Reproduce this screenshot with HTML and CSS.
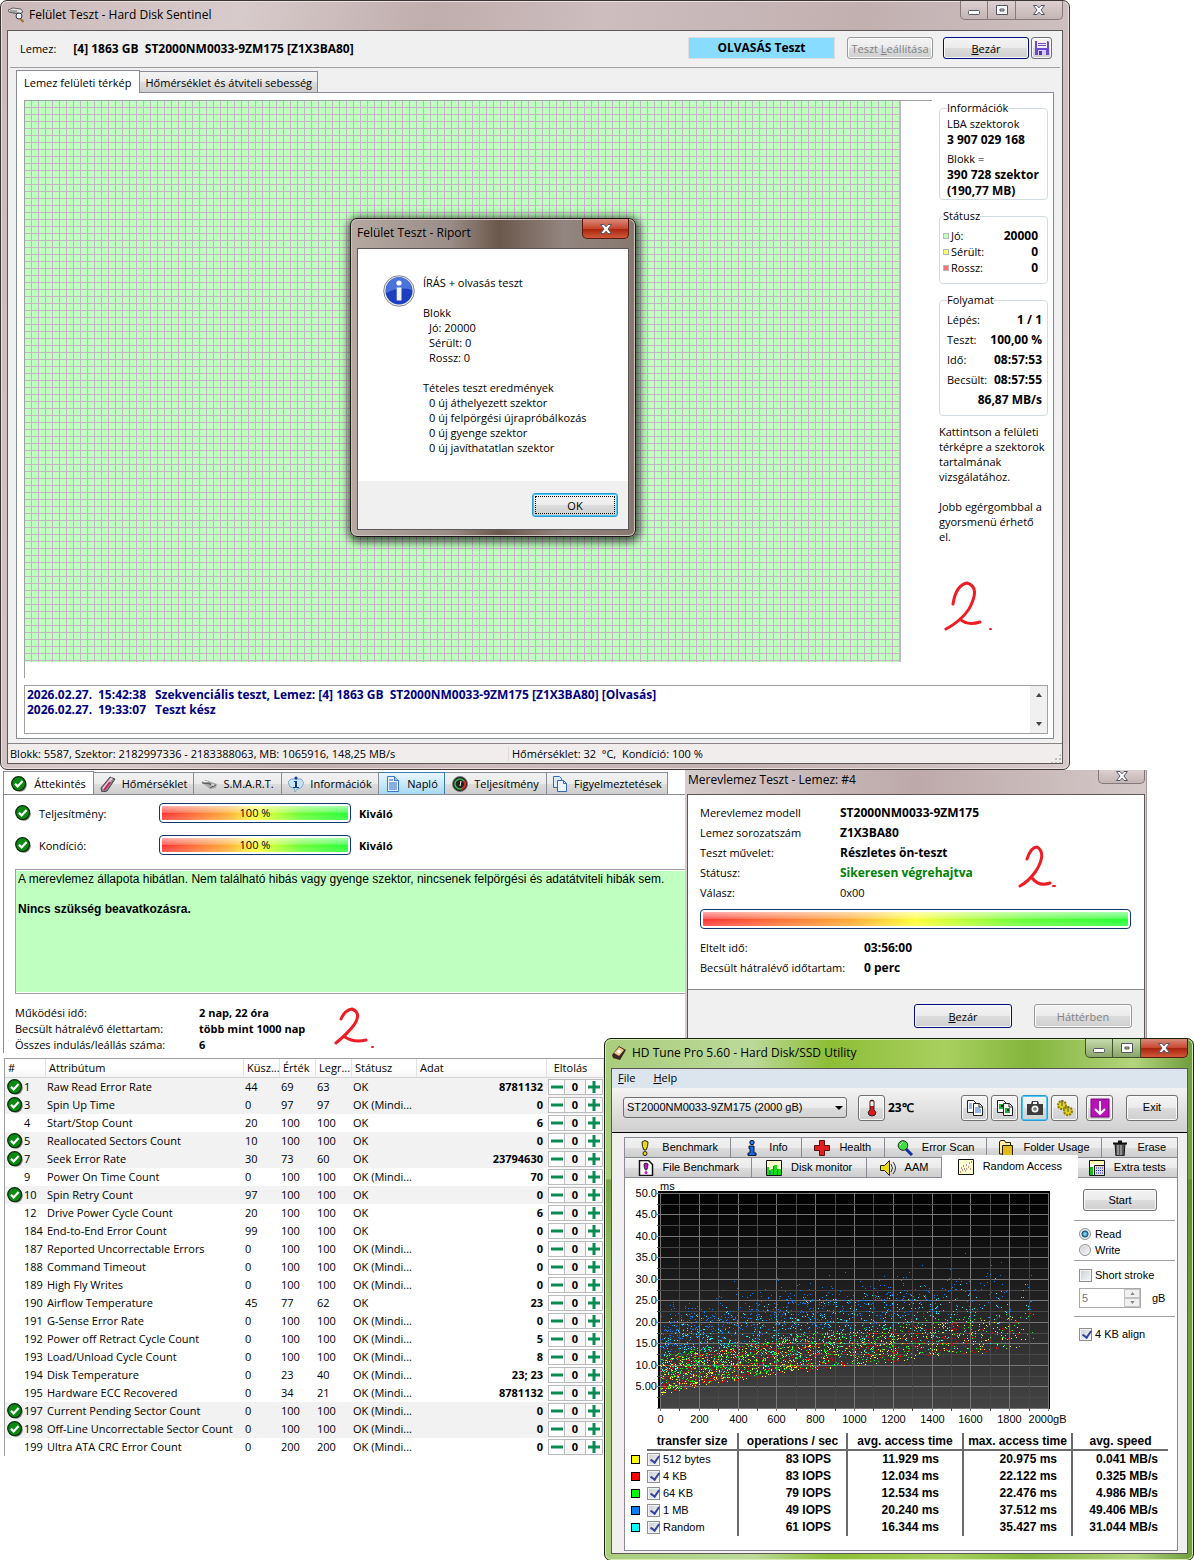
FILE: index.html
```html
<!DOCTYPE html>
<html lang="hu">
<head>
<meta charset="utf-8">
<meta name="viewport" content="width=device-width, initial-scale=1">
<title>Felület Teszt - Hard Disk Sentinel</title>
<link rel="stylesheet" href="styles.css">
</head>
<body>
<svg class="defs" aria-hidden="true">
  <symbol id="ok" viewBox="0 0 16 16"><circle cx="8.8" cy="8.8" r="7" fill="#777"/><circle cx="7.6" cy="7.6" r="6.9" fill="#0a8a12" stroke="#032c05" stroke-width="1.2"/><path d="M4 7.8l2.6 2.6 5-5.4" fill="none" stroke="#fff" stroke-width="2.2"/></symbol>
  <symbol id="min" viewBox="0 0 14 12"><rect x="1.5" y="6.500" width="11" height="4" rx="1" fill="#fff" stroke="#535666"/></symbol>
  <symbol id="max" viewBox="0 0 14 12"><path d="M1.500 1.500h11v9h-11zM5 5v2h4V5z" fill="#fff" fill-rule="evenodd" stroke="#535666"/></symbol>
  <symbol id="close" viewBox="0 0 14 12"><path d="M1.500 1.500h3.500l2 2.300 2-2.300h3.500L9 6l3.500 4.500H9L7 8.200 5 10.500H1.500L5 6z" fill="#fff" stroke="#535666"/></symbol>
  <symbol id="minus" viewBox="0 0 12 12"><path d="M0 4.500h12v3H0z" fill="#0b8a52"/></symbol>
  <symbol id="plus" viewBox="0 0 12 12"><path d="M4.500 0h3v4.500H12v3H7.500V12h-3V7.500H0v-3h4.500z" fill="#0b8a52"/></symbol>
  <symbol id="docs" viewBox="0 0 18 18"><path d="M1.500 1.500h6l3 3v9h-9z" fill="#fff" stroke="#222"/><path d="M7.500 4.500h6l3 3v9h-9z" fill="#fff" stroke="#222"/><path d="M13 4.500v3.500h3.500" fill="none" stroke="#222"/></symbol>
</svg>

<main class="desktop">
  <section class="window surface" aria-label="Felület Teszt">
    <header class="titlebar">
      <svg class="i16" viewBox="0 0 16 16"><path d="M0 3l5-2 8 1 2 3-4 2-10-2z" fill="#e4e4e4" stroke="#444" stroke-width=".8"/><path d="M2 4h7M5 6h6" stroke="#666"/><circle cx="11" cy="9" r="3" fill="#e8f4ff" stroke="#333"/><path d="M12.500 12l3 3" stroke="#a07030" stroke-width="2"/></svg>
      <h1 class="title">Felület Teszt - Hard Disk Sentinel</h1>
      <div class="controls">
        <button aria-label="Kis méret"><svg><use href="#min"/></svg></button><button aria-label="Teljes méret"><svg><use href="#max"/></svg></button><button class="wide" aria-label="Bezárás"><svg><use href="#close"/></svg></button>
      </div>
    </header>
    <div class="client">
      <div class="diskbar">
        <span>Lemez:</span><b class="diskname">[4] 1863 GB &nbsp;ST2000NM0033-9ZM175 [Z1X3BA80]</b>
        <span class="mode">OLVASÁS Teszt</span>
        <button class="btn" disabled>Teszt <u>L</u>eállítása</button>
        <button class="btn default"><u>B</u>ezár</button>
        <button class="btn square" aria-label="Mentés"><svg class="i16" viewBox="0 0 16 16"><path d="M1 1h13l1 1v13H1z" fill="#6c4ad0"/><path d="M3 1h10v7H3z" fill="#f4f0ff"/><path d="M4 3.500h8M4 5.500h8" stroke="#6c4ad0"/><path d="M4 10h8v5H4z" fill="#d6ccf5"/><path d="M5 11h3v4H5z" fill="#5536b0"/></svg></button>
      </div>
      <div class="tabs" role="tablist">
        <button class="tab active" role="tab">Lemez felületi térkép</button>
        <button class="tab" role="tab">Hőmérséklet és átviteli sebesség</button>
      </div>
      <div class="sheet">
        <div class="maprow">
          <div class="maparea"><div class="map"></div></div>
          <aside class="side">
            <fieldset><legend>Információk</legend>
              <p>LBA szektorok</p><p class="spaced"><b>3 907 029 168</b></p>
              <p>Blokk =</p><p><b>390 728 szektor</b></p><p><b>(190,77 MB)</b></p>
            </fieldset>
            <fieldset class="status"><legend>Státusz</legend>
              <dl>
                <div><dt><i class="sw good"></i>Jó:</dt><dd>20000</dd></div>
                <div><dt><i class="sw weak"></i>Sérült:</dt><dd>0</dd></div>
                <div><dt><i class="sw bad"></i>Rossz:</dt><dd>0</dd></div>
              </dl>
            </fieldset>
            <fieldset class="progressbox"><legend>Folyamat</legend>
              <dl>
                <div><dt>Lépés:</dt><dd>1 / 1</dd></div>
                <div><dt>Teszt:</dt><dd>100,00 %</dd></div>
                <div><dt>Idő:</dt><dd>08:57:53</dd></div>
                <div><dt>Becsült:</dt><dd>08:57:55</dd></div>
                <div><dt></dt><dd>86,87 MB/s</dd></div>
              </dl>
            </fieldset>
            <p class="hint">Kattintson a felületi térképre a szektorok tartalmának vizsgálatához.</p>
            <p class="hint">Jobb egérgombbal a gyorsmenü érhető el.</p>
            <svg class="mark mark-a" viewBox="0 0 50 52"><path d="M10 25Q13 6 24 4Q38 8 26 30Q18 42 3 50M17 40Q24 47 37 43"/><path d="M47 50h1"/></svg>
          </aside>
        </div>
        <div class="log">
          <ul>
            <li><span class="d">2026.02.27.</span><span class="t">15:42:38</span>Szekvenciális teszt, Lemez: [4] 1863 GB &nbsp;ST2000NM0033-9ZM175 [Z1X3BA80] [Olvasás]</li>
            <li><span class="d">2026.02.27.</span><span class="t">19:33:07</span>Teszt kész</li>
          </ul>
          <div class="scroll"><button aria-label="Fel"><svg viewBox="0 0 6 4"><path d="M0 4l3-4 3 4z"/></svg></button><button aria-label="Le"><svg viewBox="0 0 6 4"><path d="M0 0l3 4 3-4z"/></svg></button></div>
        </div>
      </div>
      <footer class="statusbar"><span>Blokk: 5587, Szektor: 2182997336 - 2183388063, MB: 1065916, 148,25 MB/s</span><span>Hőmérséklet: 32 &nbsp;°C, &nbsp;Kondíció: 100 %</span><i class="grip"></i></footer>
    </div>

    <section class="window report" role="dialog" aria-label="Felület Teszt - Riport">
      <header class="titlebar"><h2 class="title">Felület Teszt - Riport</h2>
        <div class="controls"><button class="red" aria-label="Bezárás"><svg><use href="#close"/></svg></button></div></header>
      <div class="client">
        <div class="message">
          <svg class="i32" viewBox="0 0 32 32"><circle cx="16" cy="16" r="15.300" fill="#eee" stroke="#888"/><circle cx="16" cy="16" r="13.500" fill="#1b3fbe"/><path d="M3 15a13 13 0 0 1 26 0q-12-4-26 3z" fill="#4a74dc"/><circle cx="16" cy="8" r="2.600" fill="#fff"/><path d="M13.700 12.500h4.800v13h-4.800z" fill="#f2f2f2"/></svg>
          <div>
            <p>ÍRÁS + olvasás teszt</p>
            <p class="gap">Blokk</p>
            <ul><li>Jó: 20000</li><li>Sérült: 0</li><li>Rossz: 0</li></ul>
            <p class="gap">Tételes teszt eredmények</p>
            <ul><li>0 új áthelyezett szektor</li><li>0 új felpörgési újrapróbálkozás</li><li>0 új gyenge szektor</li><li>0 új javíthatatlan szektor</li></ul>
          </div>
        </div>
        <footer><button class="btn focus">OK</button></footer>
      </div>
    </section>
  </section>

  <div class="lower">
    <div class="left">
      <section class="overview" aria-label="Áttekintés">
        <div class="tabs" role="tablist">
          <button class="tab active" role="tab"><svg class="i16"><use href="#ok"/></svg>Áttekintés</button>
          <button class="tab" role="tab"><svg class="i16" viewBox="0 0 16 16"><path d="M1 12L10 1l5 2-8 12-5 1z" fill="#888" stroke="#444"/><path d="M3 13L12 2" stroke="#f0c8dc" stroke-width="2"/><path d="M4 14l6-8" stroke="#d0206c" stroke-width="2"/></svg>Hőmérséklet</button>
          <button class="tab" role="tab"><svg class="i16" viewBox="0 0 16 16"><path d="M0 6l5-2 11 4-1 4-6 1z" fill="#aaa"/><path d="M1 7l9 1M4 5l8 5M9 12l6-3" stroke="#555"/><path d="M2 5l5 1M10 9h3" stroke="#fff"/></svg>S.M.A.R.T.</button>
          <button class="tab" role="tab"><svg class="i16" viewBox="0 0 16 16"><path d="M3 3h10l3 4-3 5-4 1-2 3-1-4-4-1-2-5z" fill="#c9e3f7" stroke="#7da9c8"/><path d="M6 5h3v6h2v1H5v-1h2V6H6z" fill="#123a9a"/><circle cx="8" cy="2" r="1.600" fill="#123a9a"/></svg>Információk</button>
          <button class="tab hot" role="tab"><svg class="i16" viewBox="0 0 16 16"><path d="M2.500.5h7l4 4v11h-11z" fill="#e6f2ff" stroke="#3c78c8"/><path d="M9.500.5v4h4" fill="#9cc4f0" stroke="#3c78c8"/><path d="M4 4h4M4 7h8M4 9h8M4 11h8M4 13h8" stroke="#2e6cc0"/></svg>Napló</button>
          <button class="tab" role="tab"><svg class="i16" viewBox="0 0 16 16"><circle cx="8" cy="8" r="7.500" fill="#222" stroke="#777"/><circle cx="8" cy="8" r="5" fill="none" stroke="#35c048" stroke-width="1.600"/><path d="M12 5a5 5 0 0 1-2 8" fill="none" stroke="#d22" stroke-width="2"/><path d="M8 10l1-5" stroke="#fff"/></svg>Teljesítmény</button>
          <button class="tab" role="tab"><svg class="i16" viewBox="0 0 16 16"><path d="M1.500.5h6l2 2v9h-8z" fill="#dcecff" stroke="#3567b8"/><path d="M5.500 4.500h6l3 3v8h-9z" fill="#eaf4ff" stroke="#3567b8"/><path d="M11.500 4.500v3h3" fill="none" stroke="#3567b8"/></svg>Figyelmeztetések</button>
        </div>
        <div class="pane">
          <div class="health"><svg class="i16"><use href="#ok"/></svg><span>Teljesítmény:</span><div class="meter" role="progressbar" aria-valuenow="100"><span>100 %</span></div><b>Kiváló</b></div>
          <div class="health"><svg class="i16"><use href="#ok"/></svg><span>Kondíció:</span><div class="meter" role="progressbar" aria-valuenow="100"><span>100 %</span></div><b>Kiváló</b></div>
          <div class="verdict"><p>A merevlemez állapota hibátlan. Nem található hibás vagy gyenge szektor, nincsenek felpörgési és adatátviteli hibák sem.</p><p><b>Nincs szükség beavatkozásra.</b></p></div>
          <dl class="facts">
            <dt>Működési idő:</dt><dd>2 nap, 22 óra</dd>
            <dt>Becsült hátralévő élettartam:</dt><dd>több mint 1000 nap</dd>
            <dt>Összes indulás/leállás száma:</dt><dd>6</dd>
          </dl>
          <svg class="mark mark-b" viewBox="0 0 42 42"><path d="M8 13Q12 4 19 3Q29 7 21 19Q15 27 3 37M12 31Q21 37 33 34"/><path d="M39 41h1"/></svg>
        </div>
      </section>
      <table class="smart">
        <colgroup><col class="c-id"><col class="c-name"><col class="c-n"><col class="c-n"><col class="c-n"><col class="c-st"><col class="c-data"><col class="c-off"></colgroup>
        <thead><tr><th>#</th><th>Attribútum</th><th>Küsz...</th><th>Érték</th><th>Legr...</th><th>Státusz</th><th>Adat</th><th class="mid">Eltolás</th></tr></thead>
        <tbody id="smart-rows"></tbody>
      </table>
    </div>

    <div class="right">
      <section class="selftest" aria-label="Merevlemez Teszt">
        <header class="titlebar"><h2 class="title">Merevlemez Teszt - Lemez: #4</h2><div class="controls"><button class="wide" aria-label="Bezárás"><svg><use href="#close"/></svg></button></div></header>
        <div class="client">
          <dl class="pairs">
            <dt>Merevlemez modell</dt><dd>ST2000NM0033-9ZM175</dd>
            <dt>Lemez sorozatszám</dt><dd>Z1X3BA80</dd>
            <dt>Teszt művelet:</dt><dd>Részletes ön-teszt</dd>
            <dt>Státusz:</dt><dd class="success">Sikeresen végrehajtva</dd>
            <dt>Válasz:</dt><dd class="plain">0x00</dd>
          </dl>
          <div class="meter" role="progressbar" aria-label="Teszt" aria-valuenow="100"></div>
          <dl class="pairs times">
            <dt>Eltelt idő:</dt><dd>03:56:00</dd>
            <dt>Becsült hátralévő időtartam:</dt><dd>0 perc</dd>
          </dl>
          <footer><button class="btn default"><u>B</u>ezár</button><button class="btn" disabled>Háttérben</button></footer>
          <svg class="mark mark-c" viewBox="0 0 38 44"><path d="M9 15Q13 3 19 3Q29 9 18 27Q10 38 2 42M14 34Q21 43 32 39"/><path d="M35 42h2"/></svg>
        </div>
      </section>

      <section class="window hdtune" aria-label="HD Tune Pro" lang="en">
        <header class="titlebar">
          <svg class="i16" viewBox="0 0 16 16"><path d="M1 10l7-9 7 4-6 10-7-2z" fill="#3a2a20"/><path d="M3 8l5-6 5 3-5 6z" fill="#f2c890"/><circle cx="8" cy="6.500" r="1.800" fill="#fff"/></svg>
          <h2 class="title">HD Tune Pro 5.60 - Hard Disk/SSD Utility</h2>
          <div class="controls"><button aria-label="Minimize"><svg><use href="#min"/></svg></button><button aria-label="Maximize"><svg><use href="#max"/></svg></button><button class="red" aria-label="Close"><svg><use href="#close"/></svg></button></div>
        </header>
        <div class="client">
          <nav class="menu"><a href="#file"><u>F</u>ile</a><a href="#help"><u>H</u>elp</a></nav>
          <div class="toolbar">
            <div class="select"><select aria-label="Drive"><option>ST2000NM0033-9ZM175 (2000 gB)</option></select></div>
            <button class="btn tool" aria-label="Temperature"><svg class="i18" viewBox="0 0 18 18"><path d="M7 2q2-2 4 0v9q3 2 1 5-3 2-6 0-2-3 1-5z" fill="#e01818" stroke="#222"/><path d="M7.500 2.500h3V7h-3z" fill="#fff"/></svg></button>
            <b class="temp">23℃</b>
            <div class="tools">
              <button class="btn tool" aria-label="Copy text"><svg class="i18"><use href="#docs"/></svg><svg class="i18 over" viewBox="0 0 18 18"><path d="M3 5h3M3 7h3M3 9h3M9 9h5M9 11h6M9 13h6" stroke="#2b6cd0"/></svg></button>
              <button class="btn tool" aria-label="Copy image"><svg class="i18"><use href="#docs"/></svg><svg class="i18 over" viewBox="0 0 18 18"><path d="M3 5h4v5H3zM9 9h5v5H9z" fill="#16b53c"/><path d="M5 6h2v2H5zM11 10h2v2h-2z" fill="#123"/></svg></button>
              <button class="btn tool hot" aria-label="Screenshot"><svg class="i18" viewBox="0 0 18 18"><path d="M1 5h4l1-3h6l1 3h4v11H1z" fill="#3c3c3c"/><path d="M7 3h4v2H7z" fill="#fff"/><circle cx="9" cy="10" r="3.500" fill="#f4f4f4"/><circle cx="9" cy="10" r="1.800" fill="#777"/></svg></button>
              <button class="btn tool" aria-label="Options"><svg class="i18" viewBox="0 0 18 18"><circle cx="6" cy="6" r="4" fill="#e0d020" stroke="#8a7c00" stroke-width="2" stroke-dasharray="2 1"/><circle cx="12" cy="12" r="4" fill="#e0d020" stroke="#8a7c00" stroke-width="2" stroke-dasharray="2 1"/><path d="M6 1v6M12 7v6" stroke="#555"/></svg></button>
              <button class="btn tool" aria-label="Save"><svg class="i20" viewBox="0 0 20 20"><path d="M1 1h18v18H1z" fill="#b812b8" stroke="#7a087a"/><path d="M10 3v13M5 11l5 5 5-5" fill="none" stroke="#fff" stroke-width="2"/></svg></button>
            </div>
            <button class="btn exit">Exit</button>
          </div>
          <div class="tabstack">
            <div class="tabs row1" role="tablist">
              <button class="tab" role="tab"><svg class="i16" viewBox="0 0 16 16"><path d="M5 2q3-3 6 0 0 5-2 8H7Q5 7 5 2z" fill="#e6dc10" stroke="#222"/><circle cx="8" cy="13.500" r="2" fill="#e6dc10" stroke="#222"/></svg>Benchmark</button>
              <button class="tab" role="tab"><svg class="i16" viewBox="0 0 16 16"><circle cx="8" cy="2.500" r="2.200" fill="#1784ff" stroke="#112"/><path d="M5 6h5v7h2v2.500H4V13h2V8.500H5z" fill="#1568e8" stroke="#112"/></svg>Info</button>
              <button class="tab" role="tab"><svg class="i16" viewBox="0 0 16 16"><path d="M5.500.5h5v5h5v5h-5v5h-5v-5h-5v-5h5z" fill="#e02020" stroke="#511"/></svg>Health</button>
              <button class="tab" role="tab"><svg class="i16" viewBox="0 0 16 16"><path d="M9 9l6 6" stroke="#112ca8" stroke-width="3"/><circle cx="6" cy="5.500" r="4.800" fill="#3ddf3d" stroke="#222"/><path d="M3 5l3-3" stroke="#dfd"/></svg>Error Scan</button>
              <button class="tab" role="tab"><svg class="i16" viewBox="0 0 16 16"><path d="M1.500 14V2l1-1.500h4l1 2h5V14z" fill="#ffec9c" stroke="#221"/><path d="M4.500 5.500h10v10h-10z" fill="#e8b818" stroke="#221"/></svg>Folder Usage</button>
              <button class="tab" role="tab"><svg class="i16" viewBox="0 0 16 16"><path d="M1 3.500h14M6 1.500h4" stroke="#111" stroke-width="2"/><path d="M3 4h10l-1 12H4z" fill="#555" stroke="#111"/><path d="M6 5v10M9 5v10" stroke="#ccc"/></svg>Erase</button>
            </div>
            <div class="tabs row2" role="tablist">
              <button class="tab" role="tab"><svg class="i16" viewBox="0 0 16 16"><path d="M1.500.5h9l4 4v11h-13z" fill="#fff" stroke="#111" stroke-width="1.500"/><path d="M6 4q2-2 4 0 0 4-1.500 6h-1Q6 8 6 4z" fill="#d010d0" stroke="#222"/><circle cx="8" cy="12.500" r="1.500" fill="#d010d0"/></svg>File Benchmark</button>
              <button class="tab" role="tab"><svg class="i16" viewBox="0 0 16 16"><path d="M.5.5h15v15H.5z" fill="#ffffcf" stroke="#111"/><path d="M1 15V7h2v3h2V9h3V5h3v4h4v6z" fill="#12e012"/><path d="M4 15v-4M7.500 15V6M11.500 15V9" stroke="#4040e0"/></svg>Disk monitor</button>
              <button class="tab" role="tab"><svg class="i16" viewBox="0 0 16 16"><path d="M.5 5.500h4l5-5v15l-5-5h-4z" fill="#e6dc10" stroke="#222"/><path d="M11 4q3 4 0 8M13 2q5 6 0 12" fill="none" stroke="#333"/></svg>AAM</button>
              <button class="tab active" role="tab"><svg class="i16" viewBox="0 0 16 16"><path d="M.5.5h15v15H.5z" fill="#ffffcf" stroke="#111"/><path d="M3 9h1M5 7h1M8 6h1M11 4h1M6 10h1M13 3h1" stroke="#22c"/><path d="M2 13h1M4 11h1M8 10h1M10 8h1M12 10h1M7 12h1" stroke="#d22"/></svg>Random Access</button>
              <button class="tab" role="tab"><svg class="i16" viewBox="0 0 16 16"><path d="M.5.5h15v15H.5z" fill="#fff" stroke="#111"/><path d="M1 1h14v3H1z" fill="#ffffb0"/><path d="M1 7h3v8H1z" fill="#12c012"/><path d="M5.500 5.500h10v10h-10z" fill="#ddd" stroke="#111"/><path d="M7 8h7M7 10.500h7M7 13h7" stroke="#22c" stroke-dasharray="1 1"/></svg>Extra tests</button>
            </div>
            <div class="sheet">
              <div class="plotrow">
                <svg id="plot" class="plot" role="img" aria-label="Random access scatter plot"></svg>
                <form class="options">
                  <button type="button" class="btn start">Start</button>
                  <div class="group"><label><input type="radio" name="mode" checked>Read</label><label><input type="radio" name="mode">Write</label></div>
                  <div class="group stroke"><label><input type="checkbox">Short stroke</label>
                    <div class="spinrow"><span class="spin"><input type="text" value="5" disabled aria-label="Size"><span class="arrows"><button type="button" disabled aria-label="Up"><svg viewBox="0 0 6 4"><path d="M0 4l3-4 3 4z"/></svg></button><button type="button" disabled aria-label="Down"><svg viewBox="0 0 6 4"><path d="M0 0l3 4 3-4z"/></svg></button></span></span><span>gB</span></div>
                  </div>
                  <div class="group align"><label><input type="checkbox" checked>4 KB align</label></div>
                </form>
              </div>
              <table class="results">
                <colgroup><col class="r-sw"><col class="r-size"><col class="r-ops"><col class="r-avg"><col class="r-max"><col class="r-speed"></colgroup>
                <thead><tr><td></td><th>transfer size</th><th>operations / sec</th><th>avg. access time</th><th>max. access time</th><th>avg. speed</th></tr></thead>
                <tbody>
                  <tr><td><i class="key yellow"></i></td><th><label><input type="checkbox" checked>512 bytes</label></th><td>83 IOPS</td><td>11.929 ms</td><td>20.975 ms</td><td>0.041 MB/s</td></tr>
                  <tr><td><i class="key red"></i></td><th><label><input type="checkbox" checked>4 KB</label></th><td>83 IOPS</td><td>12.034 ms</td><td>22.122 ms</td><td>0.325 MB/s</td></tr>
                  <tr><td><i class="key green"></i></td><th><label><input type="checkbox" checked>64 KB</label></th><td>79 IOPS</td><td>12.534 ms</td><td>22.476 ms</td><td>4.986 MB/s</td></tr>
                  <tr><td><i class="key blue"></i></td><th><label><input type="checkbox" checked>1 MB</label></th><td>49 IOPS</td><td>20.240 ms</td><td>37.512 ms</td><td>49.406 MB/s</td></tr>
                  <tr><td><i class="key cyan"></i></td><th><label><input type="checkbox" checked>Random</label></th><td>61 IOPS</td><td>16.344 ms</td><td>35.427 ms</td><td>31.044 MB/s</td></tr>
                </tbody>
              </table>
            </div>
          </div>
        </div>
      </section>
    </div>
  </div>
</main>
<script src="app.js"></script>
</body>
</html>
```
FILE: styles.css
```css
* { box-sizing: border-box; }
body { margin: 0; background: #fff; color: #000; font: 11px/15px "Open Sans", "Noto Sans", sans-serif; }
h1, h2, p, ul, dl, dd { margin: 0; padding: 0; }
ul { list-style: none; }
button, input, select { font: inherit; color: inherit; margin: 0; }
button { padding: 0; }
svg { display: block; flex: none; }
b, dd { font-weight: 700; }
.defs { position: absolute; width: 0; height: 0; }
.i16 { width: 16px; height: 16px; }
.i18 { width: 18px; height: 18px; }
.i20 { width: 20px; height: 20px; }
.i32 { width: 32px; height: 32px; }

/* Window chrome */
.window { position: relative; border: 1px solid #3d3535; border-radius: 7px; padding: 0 6px 6px; background: linear-gradient(100deg, #cbb9ba, #d8cbcb 20%, #c0adae 36%, #cdbdbe 50%, #c2b0b1 72%, #d5c9c9); box-shadow: inset 0 0 0 1px #e9dfdf; }
.titlebar { display: flex; align-items: center; gap: 5px; height: 29px; padding-bottom: 2px; }
.title { flex: 1; font-size: 12px; font-weight: 400; line-height: 16px; }
.controls { display: flex; align-self: flex-start; }
.controls button { display: grid; place-items: center; width: 28px; height: 19px; border: 1px solid #85787a; border-left-width: 0; border-top: 0; background: linear-gradient(#ddd0d0, #c4b4b5); }
.controls button:first-child { border-left-width: 1px; border-bottom-left-radius: 5px; }
.controls button:last-child { border-bottom-right-radius: 5px; }
.controls .wide { width: 47px; }
.controls .red { width: 47px; border-color: #5a1a10; background: linear-gradient(#d98c7c, #c8452c 50%, #a8230c 51%, #d0583a); }
.controls svg { width: 14px; height: 12px; }
.client { border: 1px solid #5e5758; background: #f0f0f0; }

.btn { height: 22px; border: 1px solid #707070; border-radius: 3px; background: linear-gradient(#f4f4f4, #ebebeb 50%, #dcdcdc 51%, #cfcfcf); box-shadow: inset 0 0 0 1px #fafafa; }
.btn:disabled { color: #838383; border-color: #9a9a9a; }
.btn.default { border-color: #000c80; }
.btn.focus { border-color: #2a9ad0; box-shadow: inset 0 0 0 1px #4cc8f4; outline: 1px dotted #000; outline-offset: -4px; }
.btn.hot { border-color: #2a9ad0; box-shadow: inset 0 0 0 1px #4cc8f4; }

.tabs { display: flex; align-items: flex-end; }
.tab { display: flex; align-items: center; justify-content: center; height: 21px; border: 1px solid #898c95; border-bottom: 0; background: linear-gradient(#f2f2f2, #ebebeb 50%, #dddddd 51%, #cdcdcd); white-space: nowrap; }
.tab + .tab { border-left: 0; }
.tab.active { position: relative; background: #fff; }

.mark { position: absolute; fill: none; stroke: #ee1c24; stroke-width: 3; stroke-linecap: round; }
.mark path + path { stroke-width: 2; }

/* Surface test */
.surface { margin-right: 124px; padding-bottom: 5px; }
.surface > .titlebar { padding-left: 1px; }
.diskbar { display: flex; align-items: center; height: 37px; margin: 0 2px; padding: 0 8px 2px 10px; border-bottom: 1px solid #a0a0a0; }
.diskname { flex: 1; padding-left: 17px; font-size: 12px; white-space: nowrap; }
.mode { width: 147px; margin-right: 12px; border: 1px solid #ddd; background: #88dcff; font-size: 12px; font-weight: 700; line-height: 20px; text-align: center; }
.diskbar .btn { width: 86px; }
.diskbar .btn + .btn { margin-left: 10px; }
.diskbar .btn.square { display: grid; place-items: center; width: 21px; margin-left: 2px; }
.surface .client > .tabs { padding: 2px 8px 0; }
.surface .client > .tabs .tab { padding: 0 5px; }
.surface .client > .tabs .active { height: 23px; padding: 0 8px 0 7px; margin-bottom: -1px; }
.sheet { border: 1px solid #898c95; background: #fff; }
.surface .sheet { margin: 0 8px 4px; padding: 7px 5px 4px 7px; }
.maprow { display: flex; gap: 7px; height: 578px; }
.maparea { flex: 1; border: solid #a0a0a0; border-width: 1px 0 0 1px; overflow: hidden; }
.map { width: 876px; height: 561px; background: repeating-linear-gradient(90deg, transparent 0 6px, #c6b4c6 6px 7px), repeating-linear-gradient(#bfffbf 0 6px, #c6b4c6 6px 7px); border-right: 1px solid #c6b4c6; }
.side { position: relative; width: 109px; display: flex; flex-direction: column; gap: 8px; }
fieldset { min-width: 0; margin: 0; padding: 0 7px; border: 1px solid #d0dbe2; border-radius: 4px; line-height: 16px; }
legend { padding: 0; }
.side b, .side dd { font-size: 12px; }
.side dl div { display: flex; justify-content: space-between; }
.side p { white-space: nowrap; }
.side .spaced { margin-bottom: 3px; }
.side .status { padding: 4px 9px 7px 3px; }
.side .progressbox { padding: 2px 5px 5px 7px; line-height: 20px; }
.progressbox legend { line-height: 16px; }
.side .hint { margin-bottom: 7px; white-space: normal; }
.sw { display: inline-block; width: 6px; height: 6px; margin-right: 2px; border: 1px solid #b8b8b8; vertical-align: 1px; }
.good { background: #bfffbf; } .weak { background: #ff6; } .bad { background: #ff7070; }
.mark-a { left: 4px; top: 479px; width: 50px; height: 52px; }
.log { display: flex; height: 49px; margin-top: 7px; border: 1px solid #a0a0a0; color: #000080; font-size: 12px; font-weight: 700; }
.log ul { flex: 1; padding: 1px 2px; }
.log span { display: inline-block; }
.log .d { width: 71px; } .log .t { width: 57px; }
.scroll { display: flex; flex-direction: column; justify-content: space-between; width: 17px; background: #f0f0f0; }
.scroll button { display: grid; place-items: center; height: 18px; border: 0; background: none; }
.scroll svg, .arrows svg { width: 6px; height: 4px; fill: #444; }
.statusbar { display: grid; grid-template-columns: 498px 1fr 12px; align-items: center; height: 20px; padding-left: 2px; border-top: 1px solid #8a8485; background: #f1eded; }
.statusbar span + span { border-left: 1px solid #ddd; padding-left: 3px; }
.grip { align-self: end; height: 10px; background: radial-gradient(#bbb 1px, transparent 1px) 0 0 / 4px 4px; clip-path: polygon(100% 0, 100% 100%, 0 100%); }

/* Report dialog */
.report { position: absolute; left: 349px; top: 217px; width: 286px; border-color: #1d1614; background: linear-gradient(90deg, #b5a9a2, #9a8c86 35%, #6b584c 52%, #93857f 75%, #87786f); box-shadow: inset 0 0 0 1px #cfc5c0, 1px 2px 9px 3px #000a; }
.report .controls .red { height: 20px; }
.message { display: flex; gap: 8px; height: 232px; padding: 26px 25px 0; background: #fff; }
.message .gap { margin-top: 15px; }
.message li { padding-left: 6px; white-space: nowrap; }
.report footer { display: flex; justify-content: flex-end; padding: 12px 10px; }
.report footer .btn { width: 86px; height: 24px; }

/* Overview */
.lower { display: flex; align-items: flex-start; }
.left { flex: none; width: 685px; padding-left: 3px; }
.right { position: relative; flex: 1; margin-left: -81px; min-width: 0; }
.overview .tabs { display: grid; grid-template-columns: 91px 100px 88px 97px 66px 102px 121px; padding-top: 1px; }
.overview .tab { gap: 6px; height: 22px; padding: 0 3px; }
.overview .tab.active { height: 24px; margin-bottom: -1px; gap: 7px; padding: 0 6px; }
.overview .hot { background: linear-gradient(#eaf6fd, #c9e9fb 50%, #a6d9f4); border-color: #3c7fb1; }
.pane { position: relative; border: solid #898c95; border-width: 1px 0 0 1px; height: 259px; padding: 8px 0 0 11px; }
.health { display: grid; grid-template-columns: 24px 120px 192px 1fr; align-items: center; height: 20px; margin-bottom: 12px; }
.health b { padding-left: 8px; }
.meter { display: grid; place-items: center; height: 20px; border: 1px solid #10386c; border-radius: 4px; padding: 2px; background: linear-gradient(#fff9, #fff3 50%, transparent 51%, #fff3) content-box, linear-gradient(90deg, #f33, #fa3 35%, #ff3 50%, #6f3 75%, #2f3) content-box; line-height: 14px; }
.verdict { height: 125px; margin-top: 14px; padding: 2px; border: solid #a0a0a0; border-width: 1px 0 1px 1px; background: #bfffbf; font: 12px/15px "Liberation Sans", Arial, sans-serif; white-space: nowrap; box-shadow: inset 0 1px #fff, inset 0 -1px #fff; }
.verdict p + p { margin-top: 15px; }
.facts { display: grid; grid-template-columns: 184px 1fr; margin-top: 11px; line-height: 16px; }
.mark-b { left: 329px; top: 211px; width: 42px; height: 42px; }

/* Attribute table */
.smart { width: 600px; margin: 5px 0 0 1px; border-collapse: separate; border-spacing: 0; table-layout: fixed; border: solid #a0a0a0; border-width: 1px 0 0 1px; line-height: 18px; }
.c-id { width: 41px; } .c-name { width: 198px; } .c-n { width: 36px; } .c-st { width: 65px; } .c-off { width: 57px; }
.smart th { padding: 0 3px; border-right: 1px solid #e2e2e2; border-bottom: 1px solid #d5d5d5; background: linear-gradient(#fff 50%, #f4f4f5); font-weight: 400; text-align: left; white-space: nowrap; }
.smart th.mid { padding-right: 12px; text-align: center; }
.smart td { height: 18px; padding: 0 1px; white-space: nowrap; }
.smart .flag td { background: #f2f2f2; }
.smart .id { display: flex; align-items: center; gap: 1px; padding-left: 1px; }
.smart .id .i16 { flex: none; }
.smart .data { padding-right: 4px; font-weight: 700; text-align: right; }
.offset { display: grid; grid-template-columns: 15px 22px 1fr; height: 16px; border: 1px solid #bbb; background: #fff; text-align: center; font-weight: 700; line-height: 14px; }
.offset button { display: grid; place-items: center; border: 0; background: none; }
.offset output { border: solid #bbb; border-width: 0 1px; background: #f6f6f6; }
.offset svg { width: 12px; height: 12px; }

/* Self-test dialog */
.selftest { margin: 0 47px 0 81px; border-right: 1px solid #a89a9b; padding: 0 1px 0 2px; background: linear-gradient(90deg, #d6cccc, #bda9aa 50%, #d5c9c9); }
.selftest .titlebar { height: 24px; align-items: flex-start; }
.selftest .title { padding: 2px 0 0 1px; }
.selftest .controls button { height: 14px; align-items: start; }
.selftest .client { position: relative; border-bottom: 0; background: #fff; }
.selftest dd { font-size: 12px; }
.pairs { display: grid; grid-template-columns: 140px 1fr; padding: 8px 12px 6px; line-height: 20px; }
.pairs.times { grid-template-columns: 164px 1fr; padding: 9px 12px 11px; }
.success { color: #008000; }
.selftest .plain { font-size: 11px; font-weight: 400; }
.selftest .meter { margin: 0 13px 0 12px; }
.selftest footer { display: flex; justify-content: flex-end; gap: 22px; height: 49px; padding: 14px 12px 0; border-top: 1px solid #888; background: #f0f0f0; }
.selftest footer .btn { width: 98px; height: 24px; }
.mark-c { left: 330px; top: 49px; width: 38px; height: 44px; }

/* HD Tune */
.hdtune { font-family: "Liberation Sans", Arial, sans-serif; padding-right: 5px; border-color: #16220a; background: linear-gradient(#fff0 0 140px, #4d7a1880 141px, #4d7a1800 300px), linear-gradient(90deg, #a9cd7c, #bcd99a 25%, #8dbd35 38%, #a8d060 58%, #84b53c 72%, #b3d47c 90%, #6e9c3c); box-shadow: inset 0 0 0 1px #d6ebb4; }
.hdtune .title, .menu { font-family: "Open Sans", sans-serif; }
.hdtune .controls button { border-color: #42532c; background: linear-gradient(#c8dcae, #8aa468); }
.hdtune .controls button.red { border-color: #5a1a10; background: linear-gradient(#d98c7c, #c8452c 50%, #a8230c 51%, #d0583a); }
.menu { display: flex; gap: 18px; height: 19px; padding: 1px 6px; background: #dce4ee; }
.menu a { color: inherit; text-decoration: none; }
.toolbar { display: flex; align-items: center; height: 45px; padding: 0 9px 5px 11px; border-bottom: 1px solid #000; background: linear-gradient(#f3f3f3, #cfcfcf); }
.select { position: relative; flex: 1; max-width: 224px; }
.select select { width: 100%; height: 21px; padding: 0 3px; appearance: none; border: 1px solid #707070; border-radius: 3px; background: linear-gradient(#f4f4f4, #ebebeb 50%, #dcdcdc 51%, #d2d2d2); }
.select::after { content: ""; position: absolute; right: 4px; top: 9px; border: 4px solid transparent; border-top-color: #000; border-bottom: 0; }
.tool { position: relative; display: grid; place-items: center; width: 27px; height: 26px; }
.tool .over { position: absolute; left: 4px; top: 3px; }
.select + .tool { margin-left: 11px; }
.temp { margin-left: 3px; font: 700 12px/16px "Open Sans", sans-serif; }
.tools { display: flex; gap: 3px; margin-left: auto; }
.tools .tool:last-child { margin-left: 5px; }
.exit { width: 52px; height: 26px; margin-left: 13px; }
.tabstack { padding: 4px 9px 2px 12px; }
.hdtune .tabs { display: grid; }
.row1 { grid-template-columns: 107fr 70fr 83fr 102fr 114fr 76fr; }
.row2 { grid-template-columns: 128fr 114fr 75fr 135fr 100fr; align-items: end; }
.hdtune .tab { gap: 9px; height: 20px; overflow: hidden; padding: 0 4px; }
.hdtune .tab.active { height: 23px; margin: -3px 0 -1px; border: 0; }
.tabstack .sheet { padding-bottom: 14px; }
.plotrow { display: flex; }
.plot { flex: 1; min-width: 0; height: 254px; font-size: 11px; }
.options { width: 103px; padding: 11px 2px 0 0; }
.start { display: block; width: 74px; margin: 0 0 9px 9px; }
.group { border-top: 1px solid #a0a0a0; padding: 5px 5px 2px; }
.group label { display: flex; align-items: center; gap: 3px; height: 16px; white-space: nowrap; }
.stroke { padding: 6px 5px 8px; }
.align { padding-top: 9px; }
input[type=radio], input[type=checkbox] { appearance: none; flex: none; width: 13px; height: 13px; border: 1px solid #8e8f8f; background: linear-gradient(135deg, #c9cdd3, #f8f8f8); box-shadow: inset 0 0 0 1px #f4f4f4; }
input[type=radio] { border-radius: 50%; width: 12px; height: 12px; margin-right: 1px; }
input[type=radio]:checked { background: radial-gradient(#7fd4f6 0 1px, #12507c 3px, #e4e4e4 4px); }
input[type=checkbox]:checked::after { content: ""; display: block; width: 4px; height: 7px; margin: 0 0 0 4px; border: solid #34479c; border-width: 0 2px 2px 0; transform: rotate(35deg); }
.spinrow { display: flex; align-items: center; gap: 11px; margin-top: 5px; }
.spin { display: flex; width: 62px; height: 20px; border: 1px solid #a8a8a8; color: #777; }
.spin input { flex: 1; min-width: 0; border: 0; padding: 0 2px; background: #fff; }
.arrows { display: grid; width: 16px; }
.arrows button { display: grid; place-items: center; border: 1px solid #c4c4c4; background: #f0f0f0; }
.arrows svg { fill: #888; height: 3px; width: 5px; }
.results { width: calc(100% - 15px); margin: 1px 0 0 6px; border-collapse: separate; border-spacing: 0; table-layout: fixed; }
.r-sw { width: 16px; } .r-size { width: 92px; } .r-ops { width: 109px; } .r-avg { width: 116px; } .r-max { width: 109px; }
.results th, .results td { padding: 0; white-space: nowrap; }
.results thead th { height: 18px; border-bottom: 2px solid #6a6a6a; font-size: 12px; }
.results td + th, .results th + th, .results td + td, .results th + td { border-right: 2px solid #6a6a6a; }
.results tr > :last-child { border-right: 0; }
.results tbody th { font-weight: 400; text-align: left; }
.results tbody td { height: 17px; padding-right: 14px; font-size: 12px; font-weight: 700; text-align: right; }
.results tbody td:nth-child(3) { padding-right: 15px; }
.results tbody td:nth-child(4) { padding-right: 23px; }
.results tbody td:last-child { padding-right: 10px; }
.results tbody td:first-child { padding: 0; text-align: left; }
.results label { display: flex; align-items: center; gap: 3px; }
.key { display: block; width: 9px; height: 9px; border: 1px solid #000; }
.yellow { background: #ff0; } .red.key { background: #f00; } .green { background: #0f0; } .blue { background: #0080ff; } .cyan { background: #0ff; }
```
FILE: app.js
```js
// id, name, threshold, value, worst, status, data, flagged
const short = 'OK (Mindi...';
const rows = [
  [1, 'Raw Read Error Rate', 44, 69, 63, 'OK', '8781132', 1],
  [3, 'Spin Up Time', 0, 97, 97, short, '0', 1],
  [4, 'Start/Stop Count', 20, 100, 100, 'OK', '6', 0],
  [5, 'Reallocated Sectors Count', 10, 100, 100, 'OK', '0', 1],
  [7, 'Seek Error Rate', 30, 73, 60, 'OK', '23794630', 1],
  [9, 'Power On Time Count', 0, 100, 100, short, '70', 0],
  [10, 'Spin Retry Count', 97, 100, 100, 'OK', '0', 1],
  [12, 'Drive Power Cycle Count', 20, 100, 100, 'OK', '6', 0],
  [184, 'End-to-End Error Count', 99, 100, 100, 'OK', '0', 0],
  [187, 'Reported Uncorrectable Errors', 0, 100, 100, short, '0', 0],
  [188, 'Command Timeout', 0, 100, 100, short, '0', 0],
  [189, 'High Fly Writes', 0, 100, 100, short, '0', 0],
  [190, 'Airflow Temperature', 45, 77, 62, 'OK', '23', 0],
  [191, 'G-Sense Error Rate', 0, 100, 100, short, '0', 0],
  [192, 'Power off Retract Cycle Count', 0, 100, 100, short, '5', 0],
  [193, 'Load/Unload Cycle Count', 0, 100, 100, short, '8', 0],
  [194, 'Disk Temperature', 0, 23, 40, short, '23; 23', 0],
  [195, 'Hardware ECC Recovered', 0, 34, 21, short, '8781132', 0],
  [197, 'Current Pending Sector Count', 0, 100, 100, short, '0', 1],
  [198, 'Off-Line Uncorrectable Sector Count', 0, 100, 100, short, '0', 1],
  [199, 'Ultra ATA CRC Error Count', 0, 200, 200, short, '0', 0]
];
document.getElementById('smart-rows').innerHTML = rows.map(([id, name, thr, val, worst, status, data, flag]) =>
  `<tr class="${flag ? 'flag' : ''}"><td><div class="id"><svg class="i16">${flag ? '<use href="#ok"/>' : ''}</svg>${id}</div></td>` +
  `<td>${name}</td><td>${thr}</td><td>${val}</td><td>${worst}</td><td>${status}</td><td class="data">${data}</td>` +
  `<td><div class="offset"><button aria-label="Csökkentés"><svg><use href="#minus"/></svg></button><output>0</output>` +
  `<button aria-label="Növelés"><svg><use href="#plus"/></svg></button></div></td></tr>`).join('');

// Scatter plot: access time in ms against position in gB
const X0 = 35, W = 388, Y0 = 230, H = 215;
const px = g => X0 + Math.round(g / 2000 * W);
const py = ms => Y0 - Math.round(ms / 50 * H);
let seed = 20260227;
const rnd = () => {
  seed = (seed * 1664525 + 1013904223) % 4294967296;
  return seed / 4294967296;
};
const floorMs = g => 2.8 + 11 * Math.pow(g / 1900, 0.7);
const series = [
  ['#0080ff', 800, () => 8 + rnd() * 8 + rnd() * rnd() * 9],
  ['#00ffff', 750, () => rnd() * 9 + rnd() * 9],
  ['#ffff00', 800, () => rnd() * 8],
  ['#ff0000', 800, () => rnd() * 8.2],
  ['#00ff00', 800, () => 0.5 + rnd() * 8.4]
];
let out = '<defs><linearGradient id="bg" x2="0" y2="1"><stop stop-color="#000"/><stop offset="1" stop-color="#444"/></linearGradient></defs>' +
  `<rect x="33" y="13" width="392" height="218" fill="#000"/><rect x="${X0}" y="15" width="${W}" height="215" fill="url(#bg)"/>`;
for (let i = 0; i <= 20; i++) {
  const major = i % 2 === 0;
  const x = px(i * 100) + 0.5, y = py(i * 2.5) + 0.5;
  const c = major ? '#777' : '#484848';
  out += `<path d="M${x} 15V233M32 ${y}H${X0 + W}" stroke="${c}"/>`;
  if (major && i > 0) {
    out += `<text x="32" y="${y + 3.5}" text-anchor="end">${i === 2 ? '5.00' : (i * 2.5).toFixed(1)}</text>`;
  }
  if (major) {
    const last = i === 20;
    out += `<text x="${last ? x + 18 : x}" y="245" text-anchor="${last ? 'end' : 'middle'}">${i * 100}${last ? 'gB' : ''}</text>`;
  }
}
out += '<text x="35" y="12">ms</text>';
for (const [color, count, extra] of series) {
  let d = '';
  for (let n = 0; n < count; n++) {
    const g = 1960 * (1 - Math.pow(rnd(), 0.6));
    d += `M${px(g)} ${py(floorMs(g) + extra())}h1v1h-1z`;
  }
  out += `<path d="${d}" fill="${color}"/>`;
}
document.getElementById('plot').innerHTML = out;
```
